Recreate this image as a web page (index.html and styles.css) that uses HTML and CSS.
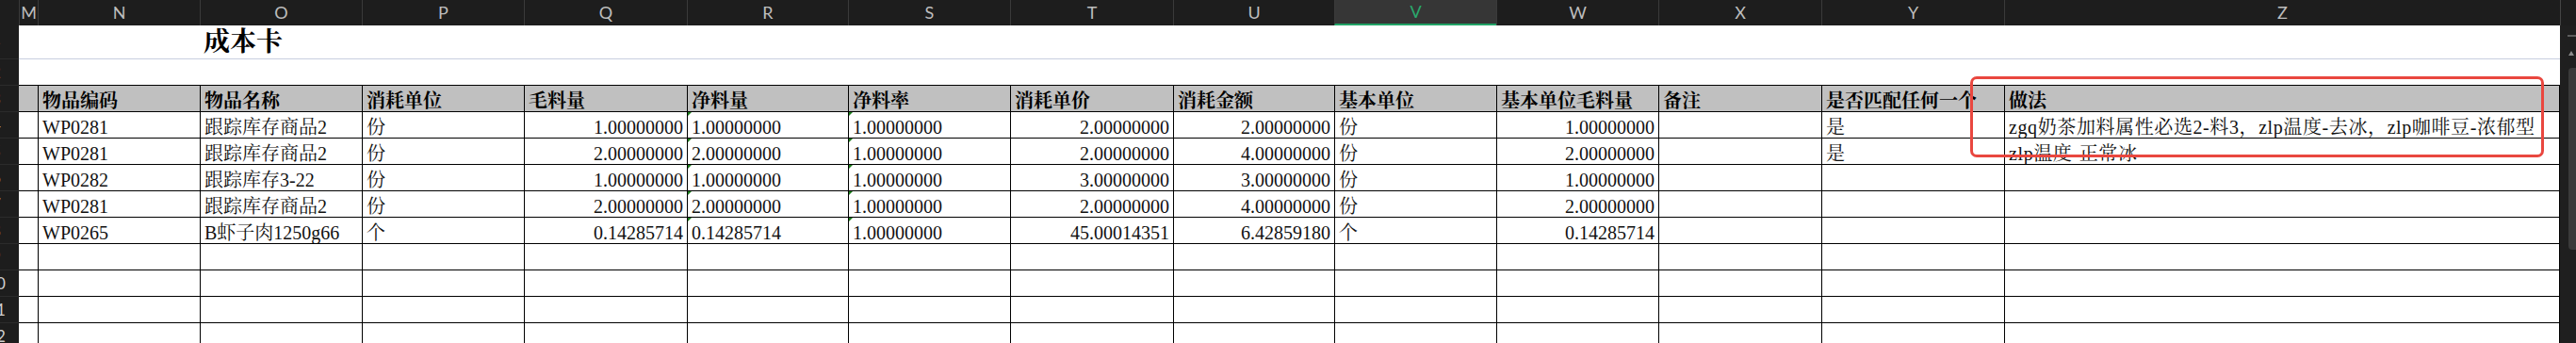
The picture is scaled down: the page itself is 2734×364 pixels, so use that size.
FILE: index.html
```html
<!DOCTYPE html>
<html lang="zh-CN">
<head>
<meta charset="utf-8">
<title>成本卡</title>
<link rel="stylesheet" href="styles.css">
</head>
<body>
<div class="sheet">
  <!-- column header bar -->
  <div class="ch corner"></div>
  <div class="ch">M</div>
  <div class="ch">N</div>
  <div class="ch">O</div>
  <div class="ch">P</div>
  <div class="ch">Q</div>
  <div class="ch">R</div>
  <div class="ch">S</div>
  <div class="ch">T</div>
  <div class="ch">U</div>
  <div class="ch active">V</div>
  <div class="ch">W</div>
  <div class="ch">X</div>
  <div class="ch">Y</div>
  <div class="ch">Z</div>
  <div class="ch sb-head"></div>

  <!-- vertical scrollbar -->
  <div class="vscroll">
    <div class="split"></div>
    <div class="arrow"></div>
    <div class="thumb"></div>
  </div>

  <!-- row 1: title -->
  <div class="rh r1"><span>1</span></div>
  <div class="blank"></div>
  <div class="blank"></div>
  <div class="blank title-cell"><span class="title">成本卡</span></div>
  <div class="blank span-rest"></div>

  <!-- row 2 -->
  <div class="rh"><span>2</span></div>
  <div class="blank r2"></div>

  <!-- row 3: table header -->
  <div class="rh"><span>3</span></div>
  <div class="c m hd"></div>
  <div class="c hd">物品编码</div>
  <div class="c hd">物品名称</div>
  <div class="c hd">消耗单位</div>
  <div class="c hd">毛料量</div>
  <div class="c hd">净料量</div>
  <div class="c hd">净料率</div>
  <div class="c hd">消耗单价</div>
  <div class="c hd">消耗金额</div>
  <div class="c hd">基本单位</div>
  <div class="c hd">基本单位毛料量</div>
  <div class="c hd">备注</div>
  <div class="c hd">是否匹配任何一个</div>
  <div class="c hd z">做法</div>

  <!-- row 4 -->
  <div class="rh"><span>4</span></div>
  <div class="c m"></div>
  <div class="c">WP0281</div>
  <div class="c">跟踪库存商品2</div>
  <div class="c">份</div>
  <div class="c num">1.00000000</div>
  <div class="c tx">1.00000000</div>
  <div class="c tx">1.00000000</div>
  <div class="c num">2.00000000</div>
  <div class="c num">2.00000000</div>
  <div class="c">份</div>
  <div class="c num">1.00000000</div>
  <div class="c"></div>
  <div class="c">是</div>
  <div class="c z lat">zgq奶茶加料属性必选2-料3，zlp温度-去冰，zlp咖啡豆-浓郁型</div>

  <!-- row 5 -->
  <div class="rh"><span>5</span></div>
  <div class="c m"></div>
  <div class="c">WP0281</div>
  <div class="c">跟踪库存商品2</div>
  <div class="c">份</div>
  <div class="c num">2.00000000</div>
  <div class="c tx">2.00000000</div>
  <div class="c tx">1.00000000</div>
  <div class="c num">2.00000000</div>
  <div class="c num">4.00000000</div>
  <div class="c">份</div>
  <div class="c num">2.00000000</div>
  <div class="c"></div>
  <div class="c">是</div>
  <div class="c z lat">zlp温度-正常冰</div>

  <!-- row 6 -->
  <div class="rh"><span>6</span></div>
  <div class="c m"></div>
  <div class="c">WP0282</div>
  <div class="c">跟踪库存3-22</div>
  <div class="c">份</div>
  <div class="c num">1.00000000</div>
  <div class="c tx">1.00000000</div>
  <div class="c tx">1.00000000</div>
  <div class="c num">3.00000000</div>
  <div class="c num">3.00000000</div>
  <div class="c">份</div>
  <div class="c num">1.00000000</div>
  <div class="c"></div>
  <div class="c"></div>
  <div class="c z"></div>

  <!-- row 7 -->
  <div class="rh"><span>7</span></div>
  <div class="c m"></div>
  <div class="c">WP0281</div>
  <div class="c">跟踪库存商品2</div>
  <div class="c">份</div>
  <div class="c num">2.00000000</div>
  <div class="c tx">2.00000000</div>
  <div class="c tx">1.00000000</div>
  <div class="c num">2.00000000</div>
  <div class="c num">4.00000000</div>
  <div class="c">份</div>
  <div class="c num">2.00000000</div>
  <div class="c"></div>
  <div class="c"></div>
  <div class="c z"></div>

  <!-- row 8 -->
  <div class="rh"><span>8</span></div>
  <div class="c m"></div>
  <div class="c">WP0265</div>
  <div class="c">B虾子肉1250g66</div>
  <div class="c">个</div>
  <div class="c num">0.14285714</div>
  <div class="c tx">0.14285714</div>
  <div class="c tx">1.00000000</div>
  <div class="c num">45.00014351</div>
  <div class="c num">6.42859180</div>
  <div class="c">个</div>
  <div class="c num">0.14285714</div>
  <div class="c"></div>
  <div class="c"></div>
  <div class="c z"></div>

  <!-- rows 9-12 empty -->
  <div class="rh"><span>9</span></div>
  <div class="c m"></div><div class="c"></div><div class="c"></div><div class="c"></div><div class="c"></div><div class="c"></div><div class="c"></div><div class="c"></div><div class="c"></div><div class="c"></div><div class="c"></div><div class="c"></div><div class="c"></div><div class="c z"></div>

  <div class="rh"><span>10</span></div>
  <div class="c m"></div><div class="c"></div><div class="c"></div><div class="c"></div><div class="c"></div><div class="c"></div><div class="c"></div><div class="c"></div><div class="c"></div><div class="c"></div><div class="c"></div><div class="c"></div><div class="c"></div><div class="c z"></div>

  <div class="rh"><span>11</span></div>
  <div class="c m"></div><div class="c"></div><div class="c"></div><div class="c"></div><div class="c"></div><div class="c"></div><div class="c"></div><div class="c"></div><div class="c"></div><div class="c"></div><div class="c"></div><div class="c"></div><div class="c"></div><div class="c z"></div>

  <div class="rh"><span>12</span></div>
  <div class="c m"></div><div class="c"></div><div class="c"></div><div class="c"></div><div class="c"></div><div class="c"></div><div class="c"></div><div class="c"></div><div class="c"></div><div class="c"></div><div class="c"></div><div class="c"></div><div class="c"></div><div class="c z"></div>

  <!-- red annotation box -->
  <div class="mark"></div>
</div>
</body>
</html>
```

FILE: styles.css
```css
html, body {
  margin: 0;
  padding: 0;
  background: #ffffff;
  overflow: hidden;
}

.sheet {
  position: relative;
  display: grid;
  grid-template-columns: 20px 20px 172px 172px 172px 173px 171px 172px 173px 171px 172px 172px 173px 194px 590px 17px;
  grid-template-rows: 27px 35px 28px repeat(10, 28px);
  width: 2734px;
  height: 364px;
  overflow: hidden;
  font-family: "Liberation Serif", "Noto Serif CJK SC", "Noto Sans CJK SC", serif;
  color: #000;
}

/* column header bar */
.ch {
  background: #1d1d1d;
  border-left: 1px solid #3a3a3a;
  color: #bdbdbd;
  font-family: Lato, "Noto Sans", sans-serif;
  font-size: 18px;
  line-height: 27px;
  text-align: center;
  box-sizing: border-box;
}
.ch.corner {
  border-left: none;
}
.ch.active {
  background: #363636;
  color: #2aa86c;
  border-bottom: 2px solid #21a366;
  line-height: 25px;
}
.ch.sb-head {
  border-left: 1px solid #444;
}

/* vertical scrollbar */
.vscroll {
  grid-column: 16;
  grid-row: 2 / -1;
  background: #1f1f1f;
  display: flex;
  flex-direction: column;
  align-items: flex-end;
  padding-top: 10px;
  box-sizing: border-box;
}
.split {
  width: 9px;
  height: 2px;
  background: #5c5c5c;
}
.arrow {
  margin-top: 15px;
  margin-right: 2px;
  width: 0;
  height: 0;
  border-left: 3px solid transparent;
  border-right: 3px solid transparent;
  border-bottom: 5px solid #8c8c8c;
}
.thumb {
  margin-top: 13px;
  width: 8px;
  height: 193px;
  background: #3a3a3a;
  border-radius: 4px 0 0 4px;
}

/* row headers */
.rh {
  background: #1d1d1d;
  border-top: 1px solid #2b2b2b;
  overflow: hidden;
  box-sizing: border-box;
}
.rh.r1 {
  border-top: none;
}
.rh span {
  display: block;
  width: 24px;
  margin-left: -16px;
  text-align: center;
  font-family: Lato, "Noto Sans", sans-serif;
  font-size: 17px;
  line-height: 27px;
  color: #cfcfcf;
}

/* title area */
.blank {
  background: #fff;
}
.span-rest {
  grid-column: 5 / 16;
}
.title-cell {
  white-space: nowrap;
  padding: 1px 0 0 4px;
  box-sizing: border-box;
}
.title {
  font-size: 28px;
  font-weight: 700;
  line-height: 33px;
}
.r2 {
  grid-column: 2 / 16;
  border-top: 1px solid #c8cee0;
  box-sizing: border-box;
}

/* table cells */
.c {
  position: relative;
  box-sizing: border-box;
  height: 28px;
  border-top: 1px solid #000;
  border-left: 1px solid #000;
  padding: 5px 4px 0 4px;
  font-size: 20px;
  line-height: 22px;
  white-space: nowrap;
  color: #111;
}
.c.m {
  border-left: none;
}
.c.z {
  border-right: 1px solid #000;
}
.c.lat {
  letter-spacing: 0.6px;
}
.c.hd {
  background: #c0c0c0;
  font-weight: 700;
  color: #000;
}
.c.num {
  text-align: right;
}
.c.tx::before {
  content: "";
  position: absolute;
  top: 0;
  left: 0;
  width: 0;
  height: 0;
  border-top: 4px solid #1b7d1b;
  border-right: 4px solid transparent;
}

/* red annotation box */
.mark {
  position: absolute;
  left: 2091px;
  top: 81px;
  width: 609px;
  height: 86px;
  box-sizing: border-box;
  border: 3px solid #e9473f;
  border-radius: 7px;
  pointer-events: none;
}
```
